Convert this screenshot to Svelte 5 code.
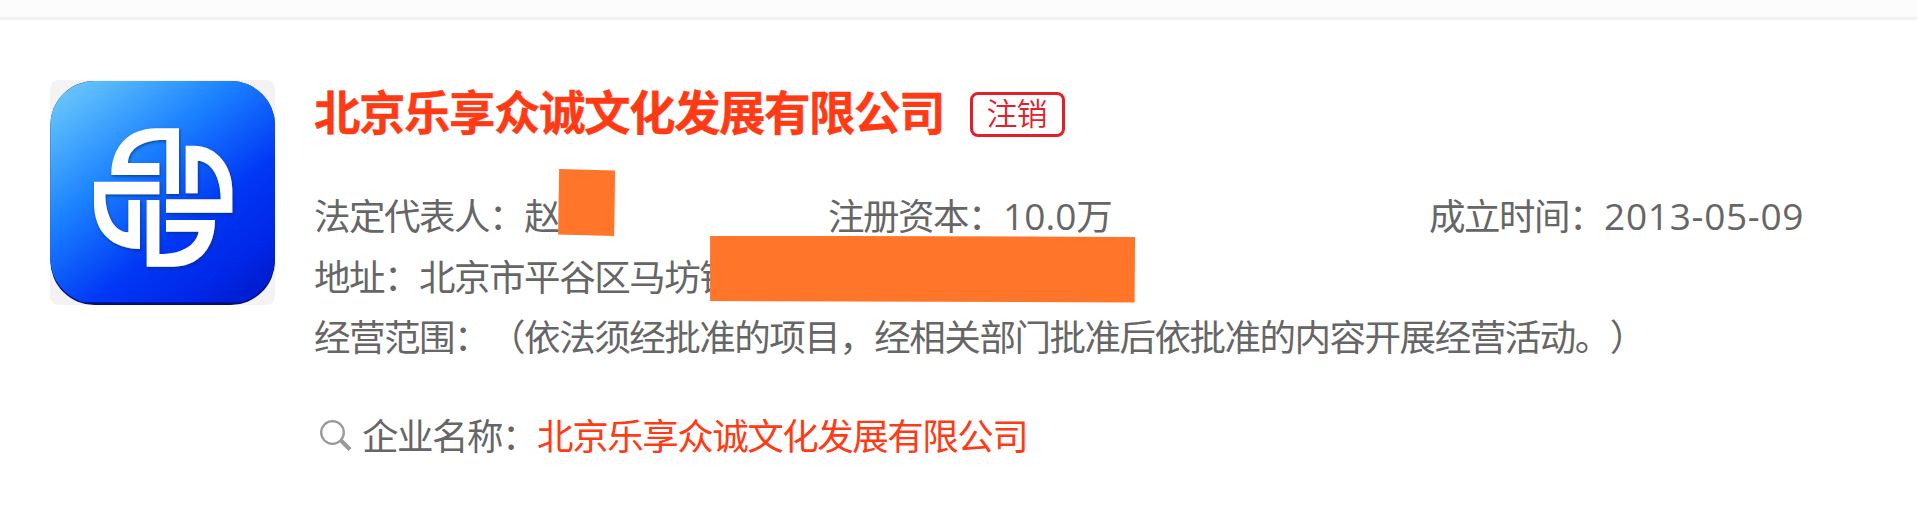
<script>
	const company = {
		name: '北京乐享众诚文化发展有限公司',
		status: '注销',
		person: '赵',
		capital: '10.0',
		founded: '2013-05-09',
		address: '北京市平谷区马坊镇',
		scope: '（依法须经批准的项目，经相关部门批准后依批准的内容开展经营活动。）'
	};
</script>

<div class="page">
	<div class="strip"></div>
	<div class="card">
		<svg class="logo" viewBox="0 0 675 675" aria-hidden="true">
			<defs>
				<linearGradient id="blue" x1="0" y1="0" x2="0.8" y2="1">
					<stop offset="0" stop-color="#78cdf8" />
					<stop offset="0.15" stop-color="#52b4fc" />
					<stop offset="0.4" stop-color="#1b82ff" />
					<stop offset="0.7" stop-color="#0038f5" />
					<stop offset="0.9" stop-color="#0027e8" />
					<stop offset="1" stop-color="#001fd4" />
				</linearGradient>
				<filter id="shade" x="-10%" y="-10%" width="120%" height="120%">
					<feDropShadow dx="3" dy="5" stdDeviation="4" flood-color="#062a78" flood-opacity="0.65" />
				</filter>
			</defs>
			<rect width="675" height="675" rx="26" fill="#f3f3f3" />
			<rect x="1" y="3" width="674" height="672" rx="133" fill="#00107a" />
			<path d="M136 3H542A133 133 0 0 1 675 136V534C675 600 630 650 574 667H101C45 650 1 600 1 534V136A133 133 0 0 1 136 3Z" fill="url(#blue)" />
			<g transform="translate(-30 -30)" fill="#fff" filter="url(#shade)">
				<path d="M214 315C214 230 266 175 350 175H417V372H379V210C320 207 264 230 264 279H358V315Z" />
				<path d="M437 370V227H462C532 227 577 290 577 360V428H378V388H542C542 320 514 275 473 272V370Z" />
				<path d="M162 335H358V373H196C196 430 220 487 265 487V390H300V537C220 537 162 490 162 400Z" />
				<path d="M320 390H358V552C420 552 466 530 476 485H378V450H525C525 540 470 590 400 590H320Z" />
			</g>
		</svg>

		<div class="info">
			<div class="title">
				<h1>{company.name}</h1>
				<span class="status">{company.status}</span>
			</div>

			<div class="row cols">
				<div>法定代表人：<span class="masked">{company.person}<i class="mask person"></i></span></div>
				<div>注册资本：<span class="num">{company.capital}</span>万</div>
				<div>成立时间：<span class="num date">{company.founded}</span></div>
			</div>
			<div class="row">地址：<span class="masked">{company.address}<i class="mask address"></i></span></div>
			<div class="row">经营范围：{company.scope}</div>

			<div class="match">
				<svg class="search" viewBox="0 0 32 32" aria-hidden="true">
					<circle cx="12.5" cy="12.5" r="11.3" />
					<path class="handle" d="M21 20.5L30 29.5" />
				</svg>
				<span>企业名称：<em>{company.name}</em></span>
			</div>
		</div>
	</div>
</div>

<style>
	:global(body) {
		margin: 0;
		background: #fff;
	}
	.page {
		height: 516px;
		overflow: hidden;
		font-family: 'Noto Sans CJK SC', sans-serif;
		font-size: 36.5px;
		letter-spacing: -1.48px;
		color: #666;
		text-spacing-trim: space-all;
	}
	.strip {
		height: 17px;
		background: #fcfcfc;
		border-bottom: 3px solid #f1f1f1;
	}
	.card {
		display: flex;
		align-items: flex-start;
		padding: 60px 50px 0;
	}
	.logo {
		width: 225px;
		height: 225px;
		flex: none;
		margin-right: 39px;
	}
	.info {
		flex: 1;
		white-space: nowrap;
	}
	.title {
		display: flex;
		align-items: center;
		height: 68px;
		gap: 26px;
		margin-bottom: 37px;
	}
	h1 {
		margin: -8px 0 0;
		font-size: 46.5px;
		letter-spacing: -1.5px;
		line-height: 68px;
		font-weight: 700;
		color: #ff3a14;
		-webkit-text-stroke: 0.4px #ff3a14;
	}
	.status {
		box-sizing: border-box;
		width: 95px;
		height: 45px;
		padding-right: 2px;
		border: 3px solid #e3202a;
		border-radius: 8px;
		font-size: 31px;
		letter-spacing: -1px;
		font-weight: 350;
		line-height: 34px;
		text-align: center;
		color: #e3202a;
	}
	.row {
		height: 60.5px;
		line-height: 60px;
	}
	.cols {
		display: grid;
		grid-template-columns: 514px 601px auto;
	}
	.num {
		font-family: 'Open Sans', sans-serif;
		font-size: 37px;
		letter-spacing: 0;
		line-height: 1;
	}
	.date {
		letter-spacing: 0.7px;
	}
	/* blocks that cover private details */
	.masked {
		position: relative;
	}
	.mask {
		position: absolute;
		background: #ff7529;
	}
	.person {
		left: 34px;
		top: -19px;
		width: 57px;
		height: 67px;
		clip-path: polygon(1px 0, 100% 1.5px, 56px 100%, 0 65.5px);
	}
	.address {
		left: 291px;
		top: -13px;
		width: 425px;
		height: 67px;
		clip-path: polygon(0 0, 100% 1.5px, 424.5px 100%, 0 65.5px);
	}
	.match {
		display: flex;
		align-items: center;
		height: 60px;
		margin-top: 38px;
		line-height: 60px;
	}
	.search {
		width: 32px;
		height: 32px;
		margin: 3px 10px 0 6px;
		fill: none;
		stroke: #999;
		stroke-width: 2.3;
	}
	.handle {
		stroke-width: 4;
	}
	em {
		font-style: normal;
		color: #ff3a14;
	}
</style>
